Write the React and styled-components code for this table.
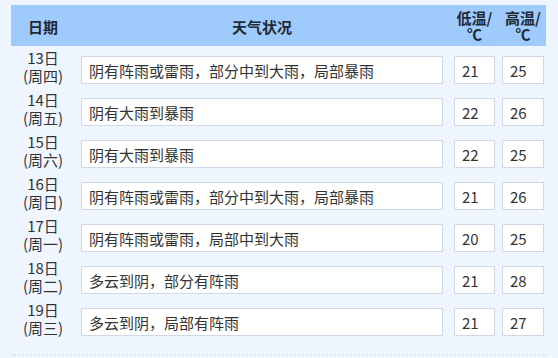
import React from "react";
import styled, { createGlobalStyle } from "styled-components";

const Global = createGlobalStyle`
  html, body { margin: 0; padding: 0; background: #eff6ff; }
  body { font-family: "Noto Sans CJK SC", "Noto Sans", sans-serif; color: #333; }
`;

const Page = styled.div`
  width: 558px;
  height: 358px;
  background: #eff6ff;
  padding: 5px 12px 0 11px;
  box-sizing: border-box;
`;

const Grid = styled.div`
  display: grid;
  grid-template-columns: 64px 362px 41px 42px;
  column-gap: 0;
`;

const HeaderRow = styled.div`
  display: grid;
  grid-template-columns: 70px 373px 48px 44px;
  height: 41px;
  background: #9fcbfc;
  align-items: center;
`;

const HeadCell = styled.div`
  font-weight: bold;
  font-size: 15px;
  line-height: 16px;
  color: #1f2a36;
  text-align: center;
  width: ${(p) => p.$w}px;
  padding-top: ${(p) => p.$pt || 0}px;
`;

const Rows = styled.div`
  margin-top: 3px;
  display: flex;
  flex-direction: column;
`;

const Row = styled.div`
  display: grid;
  grid-template-columns: 70px 373px 48px 44px;
  height: 42px;
  align-items: start;
`;

const DateCell = styled.div`
  width: 64px;
  text-align: center;
  font-size: 15px;
  line-height: 18px;
  color: #333;
  padding-left: 0px;
`;

const Box = styled.div`
  margin-top: 7px;
  height: 28px;
  width: ${(p) => p.$w}px;
  box-sizing: border-box;
  background: #fff;
  border: 1px solid #cfd8e4;
  display: flex;
  align-items: center;
  padding-left: ${(p) => p.$pl}px;
  font-size: 15px;
  color: #333;
  white-space: nowrap;
`;

const Dotted = styled.div`
  margin-top: 11px;
  height: 0;
  border-top: 2px dotted #dde6f1;
  width: 536px;
`;

const data = [
  ["13日", "(周四)", "阴有阵雨或雷雨，部分中到大雨，局部暴雨", 21, 25],
  ["14日", "(周五)", "阴有大雨到暴雨", 22, 26],
  ["15日", "(周六)", "阴有大雨到暴雨", 22, 25],
  ["16日", "(周日)", "阴有阵雨或雷雨，部分中到大雨，局部暴雨", 21, 26],
  ["17日", "(周一)", "阴有阵雨或雷雨，局部中到大雨", 20, 25],
  ["18日", "(周二)", "多云到阴，部分有阵雨", 21, 28],
  ["19日", "(周三)", "多云到阴，局部有阵雨", 21, 27],
];

export default function App() {
  return (
    <Page>
      <Global />
      <HeaderRow>
        <HeadCell $w={64} $pt={3}>日期</HeadCell>
        <HeadCell $w={362} $pt={3}>天气状况</HeadCell>
        <HeadCell $w={41}>低温/<br />℃</HeadCell>
        <HeadCell $w={42}>高温/<br />℃</HeadCell>
      </HeaderRow>
      <Rows>
        {data.map((d) => (
          <Row key={d[0]}>
            <DateCell>
              {d[0]}
              <br />
              {d[1]}
            </DateCell>
            <Box $w={362} $pl={7}>{d[2]}</Box>
            <Box $w={41} $pl={7}>{d[3]}</Box>
            <Box $w={42} $pl={7}>{d[4]}</Box>
          </Row>
        ))}
      </Rows>
      <Dotted />
    </Page>
  );
}
